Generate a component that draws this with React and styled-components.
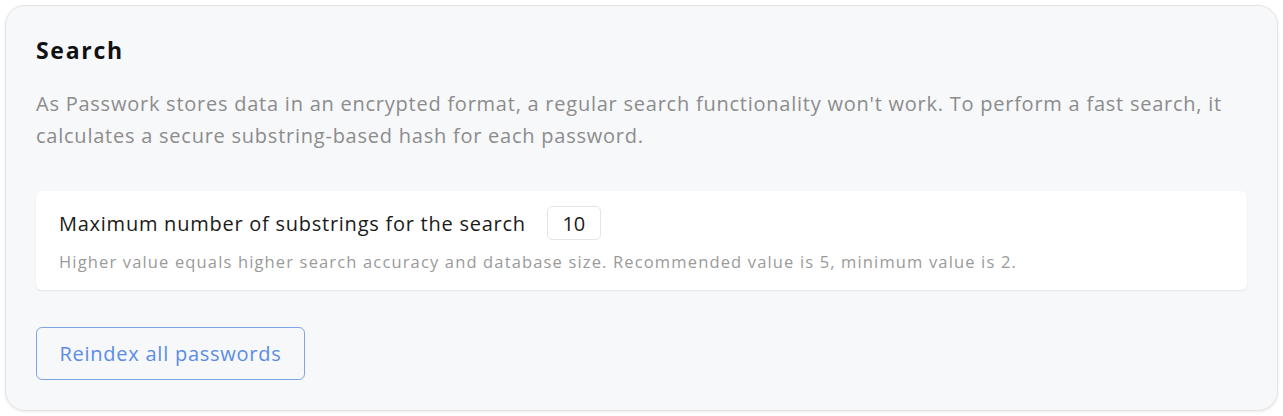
import React from "react";
import styled, { createGlobalStyle } from "styled-components";

const Global = createGlobalStyle`
  html, body { margin: 0; padding: 0; background: #ffffff; }
  body { font-family: "Open Sans", Lato, sans-serif; }
  * { box-sizing: border-box; }
`;

const Page = styled.div`
  padding: 5px;
  width: 1283px;
`;

const Card = styled.section`
  width: 1273px;
  height: 406px;
  background: #f7f8fa;
  border: 1px solid #e3e4e6;
  border-radius: 20px;
  box-shadow: 0 1px 3px rgba(0, 0, 0, 0.08);
  padding: 28px 30px 0 30px;
  display: flex;
  flex-direction: column;
`;

const Title = styled.h2`
  margin: 0;
  font-size: 23px;
  font-weight: 700;
  letter-spacing: 1.7px;
  color: #111111;
  line-height: 32px;
`;

const Description = styled.p`
  margin: 22px 0 0 0;
  font-size: 20px;
  letter-spacing: 0.76px;
  line-height: 32px;
  color: #8c8c8c;
  max-width: 1210px;
`;

const SettingBox = styled.div`
  margin-top: 39px;
  background: #ffffff;
  border-radius: 6px;
  box-shadow: 0 1px 2px rgba(0, 0, 0, 0.08);
  padding: 15px 23px 18px 23px;
  display: flex;
  flex-direction: column;
  gap: 12px;
`;

const Row = styled.div`
  display: flex;
  align-items: center;
  gap: 21px;
`;

const Label = styled.span`
  font-size: 20px;
  letter-spacing: 0.75px;
  color: #1a1a1a;
`;

const NumberBox = styled.div`
  width: 54px;
  height: 34px;
  border: 1px solid #e4e5e8;
  border-radius: 5px;
  display: flex;
  align-items: center;
  justify-content: center;
  font-size: 20px;
  color: #1a1a1a;
`;

const Hint = styled.div`
  font-size: 16.5px;
  line-height: 20px;
  letter-spacing: 1.15px;
  color: #9a9a9a;
`;

const OutlineButton = styled.button`
  margin-top: 37px;
  align-self: flex-start;
  width: 269px;
  height: 53px;
  background: transparent;
  border: 1px solid #7ea4ea;
  border-radius: 6px;
  color: #5b8ce5;
  font-family: inherit;
  font-size: 20px;
  letter-spacing: 0.75px;
  cursor: pointer;
`;

export default function App() {
  return (
    <>
      <Global />
      <Page>
        <Card>
          <Title>Search</Title>
          <Description>
            As Passwork stores data in an encrypted format, a regular search functionality won't work. To perform a fast search, it calculates a secure substring-based hash for each password.
          </Description>
          <SettingBox>
            <Row>
              <Label>Maximum number of substrings for the search</Label>
              <NumberBox>10</NumberBox>
            </Row>
            <Hint>
              Higher value equals higher search accuracy and database size. Recommended value is 5, minimum value is 2.
            </Hint>
          </SettingBox>
          <OutlineButton>Reindex all passwords</OutlineButton>
        </Card>
      </Page>
    </>
  );
}
